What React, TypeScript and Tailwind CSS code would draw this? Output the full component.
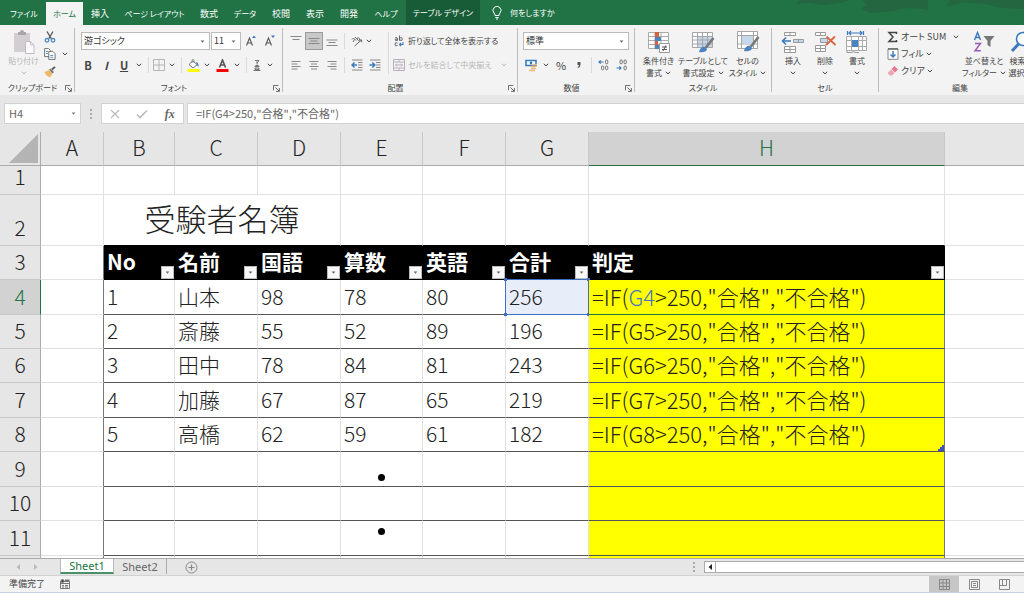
import React from "react";
import clsx from "clsx";

type IconProps = { className?: string };

const tabs = [
  { label: "ファイル", width: "w-11", size: "text-[8px]" },
  { label: "ホーム", width: "w-[37px]", size: "text-[8px]", active: true },
  { label: "挿入", width: "w-[34px]", size: "text-[9px]" },
  { label: "ページ レイアウト", width: "w-[75px]", size: "text-[8px]" },
  { label: "数式", width: "w-[34px]", size: "text-[9px]" },
  { label: "データ", width: "w-[38px]", size: "text-[8px]" },
  { label: "校閲", width: "w-[34px]", size: "text-[9px]" },
  { label: "表示", width: "w-[34px]", size: "text-[9px]" },
  { label: "開発", width: "w-[34px]", size: "text-[9px]" },
  { label: "ヘルプ", width: "w-10", size: "text-[8px]" },
  { label: "テーブル デザイン", width: "w-[74px]", size: "text-[8px]", context: true },
];

const columns = [
  { name: "A", width: "w-[63px]" },
  { name: "B", width: "w-[71px]" },
  { name: "C", width: "w-[83px]" },
  { name: "D", width: "w-[83px]" },
  { name: "E", width: "w-[82px]" },
  { name: "F", width: "w-[83px]" },
  { name: "G", width: "w-[83px]" },
  { name: "H", width: "w-[356px]" },
];

const headings = ["No", "名前", "国語", "算数", "英語", "合計", "判定"];

const students = [
  { row: 4, height: "h-[35px]", values: ["1", "山本", "98", "78", "80", "256"] },
  { row: 5, height: "h-[34px]", values: ["2", "斎藤", "55", "52", "89", "196"] },
  { row: 6, height: "h-[34px]", values: ["3", "田中", "78", "84", "81", "243"] },
  { row: 7, height: "h-[35px]", values: ["4", "加藤", "67", "87", "65", "219"] },
  { row: 8, height: "h-[34px]", values: ["5", "高橋", "62", "59", "61", "182"] },
];

const emptyRows = [
  { row: 9, height: "h-[35px]", dot: "top-[22px]" },
  { row: 10, height: "h-[34px]", dot: "" },
  { row: 11, height: "h-[35px]", dot: "top-[7px]" },
];

/* ---------- icons ---------- */

function Chevron({ className }: IconProps) {
  return (
    <svg viewBox="0 0 6 4" className={clsx("h-1 w-1.5 shrink-0", className)} fill="none" stroke="currentColor" strokeWidth="1">
      <path d="M0.8 0.8 3 2.9 5.2 0.8" />
    </svg>
  );
}

function Caret({ className }: IconProps) {
  return (
    <svg viewBox="0 0 6 4" className={clsx("h-[3px] w-[5px]", className)} fill="currentColor">
      <path d="M0.5 0.5h5L3 3.5z" />
    </svg>
  );
}

function Launcher() {
  return (
    <svg viewBox="0 0 8 8" className="size-[7px]" fill="none" stroke="#555" strokeWidth="1">
      <path d="M0.5 6V0.5H6M2.8 2.8 7 7M7.3 3.5v3.8H3.5" />
    </svg>
  );
}

function PasteIcon() {
  return (
    <svg viewBox="0 0 22 24" className="h-6 w-[22px]">
      <path d="M1 3h16v19H1z" fill="#d2ced2" />
      <path d="M5 2h2a2 2 0 0 1 4 0h2v3H5z" fill="#a9a5a9" />
      <path d="M12.500 11.500h5l3.500 3.500v8.500h-8.500z" fill="#fbfafb" stroke="#c5bcc8" />
      <path d="M17.500 11.500V15H21" fill="none" stroke="#c5bcc8" />
    </svg>
  );
}

function CutIcon() {
  return (
    <svg viewBox="0 0 12 12" className="size-3" fill="none" strokeWidth="1.3">
      <path d="M3 0.500 7.500 8M9 0.500 4.500 8" stroke="#555" />
      <circle cx="3" cy="9.300" r="1.800" stroke="#4f8bc4" />
      <circle cx="9" cy="9.300" r="1.800" stroke="#4f8bc4" />
    </svg>
  );
}

function CopyIcon() {
  return (
    <svg viewBox="0 0 12 12" className="size-3" fill="#fff" stroke="#666" strokeWidth="0.9">
      <path d="M0.600 0.600h4l2 2v6h-6z" />
      <path d="M4.800 3.400h4l2.300 2.300v5.700H4.800z" />
      <path d="M2 3.500h2M2 5.500h2M6.300 7.500h3M6.300 9.300h3" stroke="#4f8bc4" />
    </svg>
  );
}

function BrushIcon() {
  return (
    <svg viewBox="0 0 12 12" className="size-3">
      <path d="M0.500 6 5 4l3.500 3.500L6 11.500Q2 10 0.500 6z" fill="#f0b866" />
      <path d="M5 3.500 6.500 2.500 10 6 8.500 7.500z" fill="#777" />
      <path d="M8 3.500 11 0.800" stroke="#555" strokeWidth="1.800" />
    </svg>
  );
}

function GrowFont({ shrink }: { shrink?: boolean }) {
  return (
    <svg viewBox="0 0 12 12" className="size-3" fill="none">
      <path d="M1.500 10.500 4.500 3l3 7.500M2.600 8h3.800" stroke="#555" strokeWidth="1.100" />
      <path d={shrink ? "M7 0.500h4L9 3z" : "M7 3h4L9 0.500z"} fill="#3b79bd" />
    </svg>
  );
}

function BordersIcon() {
  return (
    <svg viewBox="0 0 12 12" className="size-3" fill="none" stroke="#b5b5b5">
      <path d="M0.500 0.500h11v11h-11zM6 0.500v11M0.500 6h11" />
    </svg>
  );
}

function FillIcon() {
  return (
    <svg viewBox="0 0 13 13" className="size-[13px]">
      <path d="M2 5.500 6 1.800l4 4-4 3.200z" fill="#fff" stroke="#777" />
      <path d="M5 4V1.500a1 1 0 0 1 2 0V4" fill="none" stroke="#777" strokeWidth="0.800" />
      <path d="M9 3q3 0.500 2.500 5Q9.500 6 9 3z" fill="#3b79bd" />
      <path d="M0.500 10h12v3h-12z" fill="#ff0" />
    </svg>
  );
}

function FontColorIcon() {
  return (
    <svg viewBox="0 0 13 13" className="size-[13px]" fill="none">
      <path d="M3.500 8.500 6.500 1l3 7.500M4.500 6h4" stroke="#555" strokeWidth="1.600" />
      <path d="M0.500 10h12v3h-12z" fill="#f00" />
    </svg>
  );
}

function PhoneticIcon() {
  return (
    <svg viewBox="0 0 10 12" className="h-3 w-2.5" fill="none" stroke="#666">
      <path d="M3 1.500h4L5 4M5 2.500v3M2.500 7.500h5M3.500 6.500h3M3 9h4v1.500H3zM1.500 11.500h7" strokeWidth="0.900" />
    </svg>
  );
}

function BarsIcon({ lines }: { lines: string }) {
  return (
    <svg viewBox="0 0 12 12" className="size-3" fill="none" stroke="#888" strokeWidth="1">
      <path d={lines} />
    </svg>
  );
}

function OrientationIcon() {
  return (
    <svg viewBox="0 0 12 12" className="size-3" fill="none" stroke="#666" strokeWidth="1">
      <path d="M1 4.500 2.500 3 5 5.500M2 7l1.500-2.500M4 2l3.500 3.500M6 3.500q1.500-1.500 2.500 0t-1 2.500" />
      <path d="M3.500 11 10.500 5M8.300 5h2.400v2.300" />
    </svg>
  );
}

function IndentIcon({ right }: { right?: boolean }) {
  return (
    <svg viewBox="0 0 12 12" className="size-3" fill="none">
      <path d="M1 1h10.500M7 3.500h4.500M7 6h4.500M7 8.500h4.500M1 11h10.500" stroke="#888" />
      <path d={right ? "M0.500 6h5M3.300 3.500 5.800 6 3.300 8.500" : "M6 6H1M3.500 3.500 1 6l2.500 2.500"} stroke="#3b79bd" strokeWidth="1.500" />
    </svg>
  );
}

function WrapIcon() {
  return (
    <svg viewBox="0 0 10 12" className="h-3 w-2.5" fill="none" strokeWidth="0.900">
      <path d="M1 3q2.500-1 2.500 0.600V5.500M3.500 4Q1 3.800 1 5t2.500 0M5.500 0.500v5M5.500 3.500Q8 1.500 8.300 4T5.500 5M3.500 8Q1 7 1 9.300t2.500 1.200" stroke="#555" />
      <path d="M9 7v2.500H5.500M7 8 5.500 9.500 7 11" stroke="#3b79bd" strokeWidth="1.100" />
    </svg>
  );
}

function MergeIcon() {
  return (
    <svg viewBox="0 0 12 12" className="size-3" fill="none" stroke="#b9b0bb">
      <path d="M0.500 0.500h11v11h-11zM0.500 3h11M0.500 9h11M6 0.500V3M6 9v2.500M2.500 6h7M4 4.500 2.500 6 4 7.500M8 4.500 9.500 6 8 7.500" />
    </svg>
  );
}

function CurrencyIcon() {
  return (
    <svg viewBox="0 0 13 13" className="size-[13px]">
      <path d="M1 1.500h10v5H1z" fill="#fff" stroke="#3b79bd" strokeWidth="1.600" />
      <circle cx="6" cy="4" r="1.400" fill="#3b79bd" />
      <path d="M6 7.500h5M6 9.500h5M4 11.500h6M8 5.500h4" stroke="#eebb77" strokeWidth="1.400" />
    </svg>
  );
}

function DecimalIcon({ increase }: { increase?: boolean }) {
  return (
    <svg viewBox="0 0 12 12" className="size-3" fill="none" stroke="#666" strokeWidth="0.900">
      {increase ? (
        <>
          <rect x="7.500" y="1" width="2.300" height="3.800" rx="1.100" />
          <path d="M5.500 3H1M2.700 1.300 1 3l1.700 1.700" stroke="#3b79bd" strokeWidth="1.200" />
          <rect x="3.500" y="7" width="2.300" height="3.800" rx="1.100" />
          <rect x="7.500" y="7" width="2.300" height="3.800" rx="1.100" />
        </>
      ) : (
        <>
          <rect x="4" y="1" width="2.300" height="3.800" rx="1.100" />
          <rect x="8" y="1" width="2.300" height="3.800" rx="1.100" />
          <path d="M0.500 9h4.500M3.300 7.300 5 9l-1.700 1.700" stroke="#3b79bd" strokeWidth="1.200" />
          <rect x="8" y="7" width="2.300" height="3.800" rx="1.100" />
        </>
      )}
    </svg>
  );
}

function ConditionalIcon() {
  return (
    <svg viewBox="0 0 24 22" className="h-[22px] w-6" fill="none">
      <path d="M1.500 1.500h20v16h-20z" fill="#fff" />
      <path d="M1.500 1.500h20v16h-20zM8 1.500v16M14 1.500v16M1.500 5.500h20M1.500 9.500h20M1.500 13.500h20" stroke="#aaa" />
      <path d="M8 1h4v5H8zM8 10h3v4H8z" fill="#d9603b" />
      <path d="M8 6h6v4H8zM8 14h4v4H8z" fill="#4a84c0" />
      <path d="M12.500 12.500h10v9h-10z" fill="#fff" stroke="#999" />
      <path d="M15 16h5M15 18.500h5M19 14.500l-3 5.500" stroke="#555" />
    </svg>
  );
}

function PaintBrush() {
  return (
    <>
      <path d="M22.500 7 14.500 17" stroke="#777" strokeWidth="2.600" />
      <path d="M8 21q1-5 5-5.500l3 2.500q-1 4-8 3z" fill="#4a84c0" />
    </>
  );
}

function TableFormatIcon() {
  return (
    <svg viewBox="0 0 24 22" className="h-[22px] w-6" fill="none">
      <path d="M1.500 1.500h20v15h-20z" fill="#fff" />
      <path d="M6.500 5.500h15v11h-15z" fill="#c4d7ec" />
      <path d="M1.500 1.500h20v15h-20zM6.500 1.500v15M11.500 1.500v15M16.500 1.500v15M1.500 5.500h20M1.500 9h20M1.500 13h20" stroke="#a5a5a5" />
      <PaintBrush />
    </svg>
  );
}

function CellStyleIcon() {
  return (
    <svg viewBox="0 0 24 24" className="h-6 w-6" fill="none">
      <path d="M1.500 1.500h20v17h-20z" fill="#fff" />
      <path d="M1.500 1.500h20v17h-20zM5.500 1.500v17M17.500 1.500v17M1.500 5.500h20M1.500 14h20" stroke="#a5a5a5" />
      <path d="M6 6h11v8H6z" fill="#c4d7ec" />
      <PaintBrush />
    </svg>
  );
}

function InsertCellsIcon() {
  return (
    <svg viewBox="0 0 24 24" className="h-6 w-6" fill="none" stroke="#999">
      <path d="M3.500 2.500h11v3h-11zM9 2.500v3M3.500 16.500h11v6h-11zM9 16.500v6M3.500 19.500h11" fill="#fff" />
      <path d="M12.500 9.500h10v3h-10zM17.500 9.500v3" fill="#c4d7ec" />
      <path d="M10 11H2M5 7.500 1.500 11 5 14.500" stroke="#3b79bd" strokeWidth="1.600" />
    </svg>
  );
}

function DeleteCellsIcon() {
  return (
    <svg viewBox="0 0 24 24" className="h-6 w-6" fill="none" stroke="#999">
      <path d="M2.500 2.500h10v3h-10zM7.500 2.500v3M2.500 15.500h10v6h-10zM7.500 15.500v6M2.500 18.500h10" fill="#fff" />
      <path d="M7.500 8.500h7v4h-7z" fill="#c4d7ec" />
      <path d="M13.500 6.500 22.500 15M22 6.500 13 15" stroke="#dc6440" strokeWidth="1.800" />
    </svg>
  );
}

function FormatCellsIcon() {
  return (
    <svg viewBox="0 0 24 24" className="h-6 w-6" fill="none">
      <path d="M2.500 1v4M18.500 1v4M4 3h13M6 1 4 3l2 2M15 1l2 2-2 2" stroke="#3b79bd" strokeWidth="1.200" />
      <path d="M1.500 6.500h20v14h-20z" fill="#fff" />
      <path d="M1.500 6.500h20v14h-20zM6.500 6.500v14M13.500 6.500v14M17.500 6.500v14M1.500 10.500h20M1.500 16.500h20" stroke="#aaa" />
      <path d="M7 10h6v7H7z" fill="#4a84c0" />
      <path d="M2 20.500v2h5q1-2 3 0h4" stroke="#999" />
    </svg>
  );
}

function SortFilterIcon() {
  return (
    <svg viewBox="0 0 22 22" className="size-[22px]" fill="none">
      <path d="M1.500 9 4.500 1.500 7.500 9M2.500 6.500h4" stroke="#3b79bd" strokeWidth="1.400" />
      <path d="M2 12.500h5.500L2 19.800h5.800" stroke="#9a55b8" strokeWidth="1.400" />
      <path d="M10.500 5h11l-4 5v6l-3-2v-4z" fill="#777" />
    </svg>
  );
}

function SearchIcon() {
  return (
    <svg viewBox="0 0 24 22" className="h-[22px] w-6" fill="none" stroke="#3b79bd">
      <circle cx="14" cy="8" r="6.500" fill="#fff" strokeWidth="1.600" />
      <path d="M9.500 13 3 20" strokeWidth="3" />
    </svg>
  );
}

function SigmaIcon() {
  return (
    <svg viewBox="0 0 12 12" className="size-3" fill="none" stroke="#444" strokeWidth="1.500">
      <path d="M9.500 3V1.500H2L6 6l-4 4.500h7.500V9" />
    </svg>
  );
}

function FillDownIcon() {
  return (
    <svg viewBox="0 0 12 12" className="size-3" fill="none">
      <path d="M1 0.800h10v10.500H1z" fill="#fff" stroke="#888" />
      <path d="M1 1h10" stroke="#666" strokeWidth="1.500" />
      <path d="M6 3v6M3.500 6.500 6 9l2.500-2.500" stroke="#3b79bd" strokeWidth="1.500" />
    </svg>
  );
}

function EraserIcon() {
  return (
    <svg viewBox="0 0 12 12" className="size-3">
      <path d="M7.500 1 11 4.500 8 7.500 4.500 4z" fill="#e8798f" />
      <path d="M4 4.500 7.500 8 5 10.500H3L1 8.500V7.500z" fill="#f0a3b2" />
    </svg>
  );
}

/* ---------- ribbon ---------- */

type GroupProps = {
  label: string;
  width: string;
  launcher?: boolean;
  children: React.ReactNode;
};

function Group({ label, width, launcher, children }: GroupProps) {
  return (
    <section className={clsx("group flex shrink-0", width)}>
      <div className="min-w-0 flex-1">
        <div className="h-[53px]">{children}</div>
        <div className="flex h-3.5 items-center text-[8px]">
          <span className="flex-1 text-center">{label}</span>
          {launcher && (
            <button aria-label={`${label}の設定`} className="mr-0.5">
              <Launcher />
            </button>
          )}
        </div>
      </div>
      <span className="h-16 w-px bg-[#bdbdbd] group-last:hidden" />
    </section>
  );
}

type ToolProps = {
  label: string;
  width?: string;
  className?: string;
  children: React.ReactNode;
};

function Tool({ label, width = "w-[18px]", className, children }: ToolProps) {
  return (
    <button aria-label={label} className={clsx("flex h-[18px] shrink-0 items-center justify-center", width, className)}>
      {children}
    </button>
  );
}

function More({ label }: { label: string }) {
  return (
    <Tool label={`${label}のオプション`} width="w-3">
      <Chevron />
    </Tool>
  );
}

function Separator() {
  return <span className="mx-[3px] h-4 w-px shrink-0 bg-[#dadada]" />;
}

type PickerProps = { label: string; value: string; width: string };

function Picker({ label, value, width }: PickerProps) {
  return (
    <div className={clsx("relative flex h-[18px] items-center border border-[#bbb] bg-white", width)}>
      <select
        aria-label={label}
        className="h-4 w-full appearance-none pl-0.5 text-[9px] leading-4 text-[#333] outline-none"
      >
        <option>{value}</option>
      </select>
      <Caret className="pointer-events-none absolute right-1 text-[#666]" />
    </div>
  );
}

type BigToolProps = {
  icon: React.ReactNode;
  lines: [string, string];
  width: string;
};

function BigTool({ icon, lines, width }: BigToolProps) {
  return (
    <button className={clsx("flex shrink-0 flex-col items-center text-[8px] whitespace-nowrap", width)}>
      <span className="flex h-[27px] items-center">{icon}</span>
      <span className="leading-3">{lines[0]}</span>
      <span className="flex h-3 items-center gap-[3px] leading-3">
        {lines[1]}
        <Chevron />
      </span>
    </button>
  );
}

function Ribbon() {
  return (
    <div className="flex h-[70px] overflow-hidden bg-[#f3f3f3] pt-[3px] text-[9px] whitespace-nowrap text-[#444]">
      <Group label="クリップボード" width="w-[75px]" launcher>
        <div className="flex pl-1.5">
          <button className="flex w-[35px] flex-col items-center text-[8px] text-[#b5b5b5]">
            <span className="flex h-[27px] items-center">
              <PasteIcon />
            </span>
            <span className="leading-3">貼り付け</span>
            <span className="flex h-3 items-center">
              <Chevron />
            </span>
          </button>
          <div className="flex flex-col">
            <Tool label="切り取り" className="-mb-px">
              <CutIcon />
            </Tool>
            <div className="flex">
              <Tool label="コピー">
                <CopyIcon />
              </Tool>
              <More label="コピー" />
            </div>
            <Tool label="書式のコピー">
              <BrushIcon />
            </Tool>
          </div>
        </div>
      </Group>

      <Group label="フォント" width="w-52" launcher>
        <div className="flex items-center gap-px pt-1 pl-1.5">
          <Picker label="フォント名" value="游ゴシック" width="w-[129px]" />
          <Picker label="フォント サイズ" value="11" width="w-[30px]" />
          <Tool label="フォント サイズの拡大">
            <GrowFont />
          </Tool>
          <Tool label="フォント サイズの縮小">
            <GrowFont shrink />
          </Tool>
        </div>
        <div className="flex items-center pt-1.5 pl-1">
          <Tool label="太字" className="text-[11px] font-bold">B</Tool>
          <Tool label="斜体" className="text-[11px] font-bold italic">I</Tool>
          <Tool label="下線" className="text-[11px] font-bold underline">U</Tool>
          <More label="下線" />
          <Separator />
          <Tool label="罫線" width="w-3.5">
            <BordersIcon />
          </Tool>
          <More label="罫線" />
          <Separator />
          <Tool label="塗りつぶしの色" width="w-4">
            <FillIcon />
          </Tool>
          <More label="塗りつぶしの色" />
          <Tool label="フォントの色">
            <FontColorIcon />
          </Tool>
          <More label="フォントの色" />
          <Separator />
          <Tool label="ふりがな" width="w-3.5">
            <PhoneticIcon />
          </Tool>
          <More label="ふりがな" />
        </div>
      </Group>

      <Group label="配置" width="w-[235px]" launcher>
        <div className="flex pt-1 pl-1">
          <div className="flex flex-col gap-1.5">
            <div className="flex items-center">
              <Tool label="上揃え">
                <BarsIcon lines="M0.500 1.500h11M2.500 4.500h7" />
              </Tool>
              <Tool label="上下中央揃え" className="border border-[#9b9b9b] bg-[#c8c8c8]">
                <BarsIcon lines="M0.500 3.500h11M2.500 6h7M0.500 8.500h11" />
              </Tool>
              <Tool label="下揃え">
                <BarsIcon lines="M0.500 5h11M2.500 7.500h7M0.500 10.500h11" />
              </Tool>
              <Separator />
              <Tool label="方向">
                <OrientationIcon />
              </Tool>
              <Chevron />
            </div>
            <div className="flex items-center">
              <Tool label="左揃え">
                <BarsIcon lines="M1.500 2.500h9M1.500 5h6M1.500 7.500h9M1.500 10h6" />
              </Tool>
              <Tool label="中央揃え">
                <BarsIcon lines="M1.500 2.500h9M3 5h6M1.500 7.500h9M3 10h6" />
              </Tool>
              <Tool label="右揃え">
                <BarsIcon lines="M1.500 2.500h9M4.500 5h6M1.500 7.500h9M4.500 10h6" />
              </Tool>
              <Separator />
              <Tool label="インデントを減らす">
                <IndentIcon />
              </Tool>
              <Tool label="インデントを増やす">
                <IndentIcon right />
              </Tool>
            </div>
          </div>
          <span className="mx-1 w-px bg-[#dadada]" />
          <div className="flex flex-col gap-1.5 text-[8px]">
            <button className="flex h-[18px] items-center gap-[3px]">
              <span className="flex w-3 justify-center">
                <WrapIcon />
              </span>
              折り返して全体を表示する
            </button>
            <button className="flex h-[18px] items-center gap-[3px] text-[#b5b5b5]">
              <MergeIcon />
              セルを結合して中央揃え
              <Chevron className="ml-1.5" />
            </button>
          </div>
        </div>
      </Group>

      <Group label="数値" width="w-[117px]" launcher>
        <div className="px-[5px] pt-1">
          <Picker label="表示形式" value="標準" width="w-[106px]" />
        </div>
        <div className="flex items-center pt-1.5 pl-1">
          <Tool label="通貨表示形式">
            <CurrencyIcon />
          </Tool>
          <More label="通貨表示形式" />
          <Tool label="パーセント スタイル" className="text-[11px]">%</Tool>
          <Tool label="桁区切りスタイル">
            <svg viewBox="0 0 6 8" className="h-2 w-1.5" fill="#555">
              <path d="M1.500 1h3v2.500Q4.500 6 2 7L1.500 6.200Q3 5.500 3 4H1.500z" />
            </svg>
          </Tool>
          <Separator />
          <Tool label="小数点以下の表示桁数を増やす">
            <DecimalIcon increase />
          </Tool>
          <Tool label="小数点以下の表示桁数を減らす">
            <DecimalIcon />
          </Tool>
        </div>
      </Group>

      <Group label="スタイル" width="w-[137px]">
        <div className="flex pl-[3px]">
          <BigTool icon={<ConditionalIcon />} lines={["条件付き", "書式"]} width="w-[41px]" />
          <BigTool icon={<TableFormatIcon />} lines={["テーブルとして", "書式設定"]} width="w-12" />
          <BigTool icon={<CellStyleIcon />} lines={["セルの", "スタイル"]} width="w-[41px]" />
        </div>
      </Group>

      <Group label="セル" width="w-[107px]">
        <div className="flex pl-[5px]">
          <BigTool icon={<InsertCellsIcon />} lines={["挿入", ""]} width="w-8" />
          <BigTool icon={<DeleteCellsIcon />} lines={["削除", ""]} width="w-8" />
          <BigTool icon={<FormatCellsIcon />} lines={["書式", ""]} width="w-8" />
        </div>
      </Group>

      <Group label="編集" width="w-[162px]">
        <div className="flex pl-2">
          <div className="flex w-[76px] flex-col">
            <button className="flex h-[17px] items-center gap-0.5">
              <SigmaIcon />
              オート SUM
              <Chevron className="mr-1 ml-auto" />
            </button>
            <button className="flex h-[17px] items-center gap-0.5">
              <FillDownIcon />
              フィル
              <Chevron />
            </button>
            <button className="flex h-[17px] items-center gap-0.5">
              <EraserIcon />
              クリア
              <Chevron />
            </button>
          </div>
          <BigTool icon={<SortFilterIcon />} lines={["並べ替えと", "フィルター"]} width="w-[42px]" />
          <BigTool icon={<SearchIcon />} lines={["検索と", "選択"]} width="w-8" />
        </div>
      </Group>
    </div>
  );
}

function TitleTabs() {
  return (
    <nav className="relative flex h-[25px] items-end overflow-hidden bg-[#217346] pl-0.5 text-[9px] whitespace-nowrap text-white">
      <svg viewBox="0 0 260 25" className="absolute top-0 right-0 h-[25px] w-[260px]" fill="#23663f">
        <path d="M36 0h50l-10 3-14 2-18-2-12 1z" />
        <path d="M98 0h66v11l-4-2-18-1-14 3-22 2-9-5 6-3z" />
        <path d="M186 0h74v9l-22-1-18-4-20-2-18 5z" />
      </svg>
      {tabs.map((tab) => (
        <a
          key={tab.label}
          href="#"
          className={clsx(
            "relative flex items-center justify-center",
            tab.width,
            tab.size,
            tab.active && "bg-[#f3f3f3] text-[#217346]",
            tab.context ? "h-[25px] bg-[#185c37]" : "h-[23px]"
          )}
        >
          {tab.label}
        </a>
      ))}
      <button className="relative ml-3 flex h-[25px] items-center gap-2 text-[8px]">
        <svg viewBox="0 0 10 14" className="h-3.5 w-2.5" fill="none" stroke="#fff" strokeWidth="1">
          <path d="M3 9.500Q3 8 2 7a4 4 0 1 1 6 0Q7 8 7 9.500zM3.300 11.500h3.400M4 13h2" />
        </svg>
        何をしますか
      </button>
    </nav>
  );
}

function FormulaBar() {
  return (
    <div className="flex h-[37px] gap-[3px] bg-[#e6e6e6] py-2 pl-1 [font-kerning:none]">
      <div className="relative flex w-[77px] items-center border border-[#d2d2d2] bg-white">
        <input
          aria-label="名前ボックス"
          defaultValue="H4"
          className="w-full pl-1 text-[11px] text-[#666] outline-none"
        />
        <Caret className="absolute right-1 text-[#777]" />
      </div>
      <svg viewBox="0 0 4 12" className="mx-[5px] h-3 w-1 self-center" fill="#aaa">
        <path d="M1 1h2v2H1zM1 5h2v2H1zM1 9h2v2H1z" />
      </svg>
      <div className="flex w-[83px] items-center justify-around border border-[#d2d2d2] bg-white">
        <button aria-label="キャンセル">
          <svg viewBox="0 0 10 10" className="size-2.5" stroke="#bbb" strokeWidth="1.200">
            <path d="M1 1 9 9M9 1 1 9" />
          </svg>
        </button>
        <button aria-label="入力">
          <svg viewBox="0 0 12 10" className="h-2.5 w-3" fill="none" stroke="#bbb" strokeWidth="1.700">
            <path d="M1 5.500 4 8.500 11 1.500" />
          </svg>
        </button>
        <button aria-label="関数の挿入" className="font-['Liberation_Serif',serif] text-xs font-bold text-[#666] italic">
          fx
        </button>
      </div>
      <input
        aria-label="数式バー"
        defaultValue={'=IF(G4>250,"合格","不合格")'}
        className="min-w-0 flex-1 border border-r-0 border-[#d2d2d2] bg-white pl-2 text-[11px] text-[#666] outline-none"
      />
    </div>
  );
}

/* ---------- sheet ---------- */

function RowHeader({ row, active }: { row: number; active?: boolean }) {
  return (
    <th
      scope="row"
      className={clsx(
        "border-r border-b border-b-[#c8c8c8] p-0 pb-2 text-center align-bottom leading-5 font-light",
        active ? "border-r-[#217346] bg-[#d2d2d2] text-[#217346]" : "border-r-[#ababab] bg-[#e6e6e6] text-[#222]"
      )}
    >
      {row}
    </th>
  );
}

const cell = "border-r border-b p-0 pl-[3px] pb-2 text-left align-bottom leading-5 whitespace-nowrap";
const gridLine = "border-[#e1e1e1]";
const outside = "border-r border-b border-r-[#777] border-b-[#e1e1e1]";

function Handle({ className }: IconProps) {
  return <span className={clsx("absolute size-[3px] bg-[#3f6fc4]", className)} />;
}

function Formula({ row }: { row: number }) {
  return (
    <>
      =IF(<span className={row === 4 ? "text-[#4472c4]" : ""}>G{row}</span>&gt;250,"合格","不合格")
    </>
  );
}

function Sheet() {
  return (
    <main className="min-h-0 flex-1 overflow-hidden bg-white">
      <table className="w-full table-fixed border-separate border-spacing-0 text-[21px] font-light text-[#222] [font-kerning:none]">
        <colgroup>
          <col className="w-[41px]" />
          {columns.map((column) => (
            <col key={column.name} className={column.width} />
          ))}
          <col />
        </colgroup>
        <thead>
          <tr className="h-[34px]">
            <th className="border-r border-b border-[#ababab] bg-[#e6e6e6] p-0 align-bottom">
              <svg viewBox="0 0 40 32" className="h-8 w-10" fill="#b4b4b4">
                <path d="M38 1v29H9z" />
              </svg>
            </th>
            {columns.map((column) => (
              <th
                key={column.name}
                scope="col"
                className={clsx(
                  "border-r border-b p-0 pb-1 leading-7 font-light",
                  column.name === "H"
                    ? "border-r-[#c8c8c8] border-b-[#217346] bg-[#d2d2d2] text-[#217346]"
                    : "border-r-[#c8c8c8] border-b-[#ababab] bg-[#e6e6e6]"
                )}
              >
                {column.name}
              </th>
            ))}
            <th className="border-b border-[#ababab] bg-[#e6e6e6]" />
          </tr>
        </thead>
        <tbody>
          <tr className="h-[29px]">
            <RowHeader row={1} />
            {columns.map((column) => (
              <td key={column.name} className={clsx(cell, gridLine)} />
            ))}
            <td className={clsx("border-b", gridLine)} />
          </tr>
          <tr className="h-[51px]">
            <RowHeader row={2} />
            <td className={clsx(cell, gridLine)} />
            <td colSpan={3} className="border-r border-b border-r-[#e1e1e1] border-b-black p-0 pb-1 text-center text-[31px] leading-[40px]">
              受験者名簿
            </td>
            {["E", "F", "G", "H"].map((name) => (
              <td key={name} className="border-r border-b border-r-[#e1e1e1] border-b-black" />
            ))}
            <td className={clsx("border-b", gridLine)} />
          </tr>
          <tr className="h-[34px]">
            <RowHeader row={3} />
            <td className={outside} />
            {headings.map((heading) => (
              <th key={heading} className={clsx(cell, "relative border-black bg-black font-bold text-white")}>
                {heading}
                <button
                  aria-label={`${heading}のフィルター`}
                  className="absolute right-0 bottom-0 flex size-[13px] items-center justify-center border border-[#bbb] bg-[#f8f8f8]"
                >
                  <Caret className="text-[#666]" />
                </button>
              </th>
            ))}
            <td className={clsx("border-b", gridLine)} />
          </tr>
          {students.map(({ row, height, values }) => (
            <tr key={row} className={height}>
              <RowHeader row={row} active={row === 4} />
              <td className={outside} />
              {values.map((value, i) => (
                <td
                  key={columns[i + 1].name}
                  className={clsx(
                    cell,
                    "border-r-[#e1e1e1] border-b-[#555]",
                    row === 4 && i === 5 && "relative bg-[#e8eef9]"
                  )}
                >
                  {value}
                  {row === 4 && i === 5 && (
                    <span className="pointer-events-none absolute -top-px -right-px -bottom-px -left-px border border-[#3f6fc4]">
                      <Handle className="-top-0.5 -left-0.5" />
                      <Handle className="-top-0.5 -right-0.5" />
                      <Handle className="-bottom-0.5 -left-0.5" />
                      <Handle className="-right-0.5 -bottom-0.5" />
                    </span>
                  )}
                </td>
              ))}
              <td
                className={clsx(
                  cell,
                  "relative bg-[#ff0] text-[22px]",
                  row === 4 ? "border-r-[#217346] border-b-[#217346]" : "border-r-[#777] border-b-[#555]"
                )}
              >
                <Formula row={row} />
                {row === 8 && (
                  <svg viewBox="0 0 6 6" className="absolute right-0 bottom-0 size-1.5" fill="#3f51b5">
                    <path d="M4 0h2v6H0V4h2V2h2z" />
                  </svg>
                )}
              </td>
              <td className={clsx("border-b", gridLine)} />
            </tr>
          ))}
          {emptyRows.map(({ row, height, dot }) => (
            <tr key={row} className={height}>
              <RowHeader row={row} />
              <td className={outside} />
              {["B", "C", "D", "E", "F", "G"].map((name) => (
                <td key={name} className="relative border-r border-b border-r-[#e1e1e1] border-b-[#555]">
                  {name === "E" && dot && (
                    <span className={clsx("absolute left-[37px] size-[7px] rounded-full bg-black", dot)} />
                  )}
                </td>
              ))}
              <td className="border-r border-b border-r-[#777] border-b-[#555] bg-[#ff0]" />
              <td className={clsx("border-b", gridLine)} />
            </tr>
          ))}
          {/* top edge of the next row, cut off by the sheet tabs */}
          <tr className="h-[34px]">
            <td className="border-r border-[#ababab] bg-[#e6e6e6]" />
            <td className={outside} />
            {["B", "C", "D", "E", "F", "G"].map((name) => (
              <td key={name} className={clsx("border-r", gridLine)} />
            ))}
            <td className="border-r border-[#777] bg-[#ff0]" />
            <td />
          </tr>
        </tbody>
      </table>
    </main>
  );
}

function SheetTabs() {
  return (
    <div className="flex h-[18px] shrink-0 items-center border-t border-b border-t-[#ababab] border-b-[#d2d2d2] bg-[#e6e6e6] font-['Noto_Sans',sans-serif] text-[11px] text-[#666]">
      <div className="flex w-[60px] justify-center gap-3 pr-1.5 text-[#bbb]">
        <button aria-label="前のシート">
          <svg viewBox="0 0 5 6" className="h-1.5 w-[5px]" fill="currentColor">
            <path d="M4 0v6L0.500 3z" />
          </svg>
        </button>
        <button aria-label="次のシート">
          <svg viewBox="0 0 5 6" className="h-1.5 w-[5px]" fill="currentColor">
            <path d="M1 0v6l3.500-3z" />
          </svg>
        </button>
      </div>
      <button className="mb-0.5 h-[15px] w-[54px] border-x border-b-2 border-x-[#bbb] border-b-[#4a9068] bg-white leading-[13px] text-[#217346]">
        Sheet1
      </button>
      <button className="mb-0.5 h-[15px] w-[53px] border-r border-[#aaa] leading-[13px]">Sheet2</button>
      <button aria-label="新しいシート" className="ml-[18px]">
        <svg viewBox="0 0 13 13" className="size-[13px]" fill="none" stroke="#888">
          <circle cx="6.500" cy="6.500" r="5.500" />
          <path d="M3.500 6.500h6M6.500 3.500v6" strokeWidth="1.200" />
        </svg>
      </button>
      <svg viewBox="0 0 4 10" className="ml-auto h-2.5 w-1" fill="#aaa">
        <path d="M1 0h2v2H1zM1 4h2v2H1zM1 8h2v2H1z" />
      </svg>
      <div className="ml-2 flex h-3 w-[31.25%] border-y border-[#ababab] bg-white">
        <button aria-label="左へスクロール" className="flex w-3 items-center justify-center border-x border-[#ababab]">
          <svg viewBox="0 0 5 6" className="h-1.5 w-[5px]" fill="#222">
            <path d="M4 0v6L0.500 3z" />
          </svg>
        </button>
      </div>
    </div>
  );
}

function StatusBar() {
  return (
    <footer className="flex h-[17px] shrink-0 items-stretch border-b border-[#c9cfe2] bg-[#f3f3f3] pl-[9px] text-[9px] text-[#444]">
      <span className="flex items-center">準備完了</span>
      <button aria-label="マクロの記録" className="ml-[15px] self-center">
        <svg viewBox="0 0 10 10" className="size-2.5" fill="none" stroke="#777">
          <path d="M0.500 2.500h9v7h-9zM0.500 4.500h9M2 6.500h2M5 6.500h3M2 8h2M5 8h3" />
          <circle cx="2.500" cy="2" r="1.500" fill="#444" />
          <path d="M5 1.500h4.500" strokeWidth="2" />
        </svg>
      </button>
      <div className="mr-[5px] ml-auto flex">
        <button aria-label="標準" className="flex w-[30px] items-center justify-center bg-[#c6c6c6]">
          <svg viewBox="0 0 11 11" className="size-[11px]" fill="none" stroke="#888">
            <path d="M0.500 0.500h10v10h-10zM0.500 4h10M0.500 7.500h10M4 0.500v10M7.500 0.500v10" />
          </svg>
        </button>
        <button aria-label="ページ レイアウト" className="flex w-[30px] items-center justify-center">
          <svg viewBox="0 0 11 11" className="size-[11px]" fill="none" stroke="#888">
            <path d="M0.500 0.500h10v10h-10zM2.500 2.500h6v6h-6zM4 4.500h3M4 6.500h3" />
          </svg>
        </button>
        <button aria-label="改ページ プレビュー" className="flex w-[30px] items-center justify-center">
          <svg viewBox="0 0 11 11" className="size-[11px]" fill="none" stroke="#888">
            <path d="M0.500 0.500h10v10h-10zM3.500 0.500v6M7.500 0.500v6h-7" />
          </svg>
        </button>
      </div>
    </footer>
  );
}

function App() {
  return (
    <div className="flex h-screen flex-col overflow-hidden bg-[#e6e6e6] font-['Noto_Sans_CJK_JP',sans-serif]">
      <header className="shrink-0">
        {/* proportional kana keep the ribbon labels compact */}
        <div className="[font-feature-settings:'palt']">
          <TitleTabs />
          <Ribbon />
        </div>
        <FormulaBar />
      </header>
      <Sheet />
      <SheetTabs />
      <StatusBar />
    </div>
  );
}

export default App;
